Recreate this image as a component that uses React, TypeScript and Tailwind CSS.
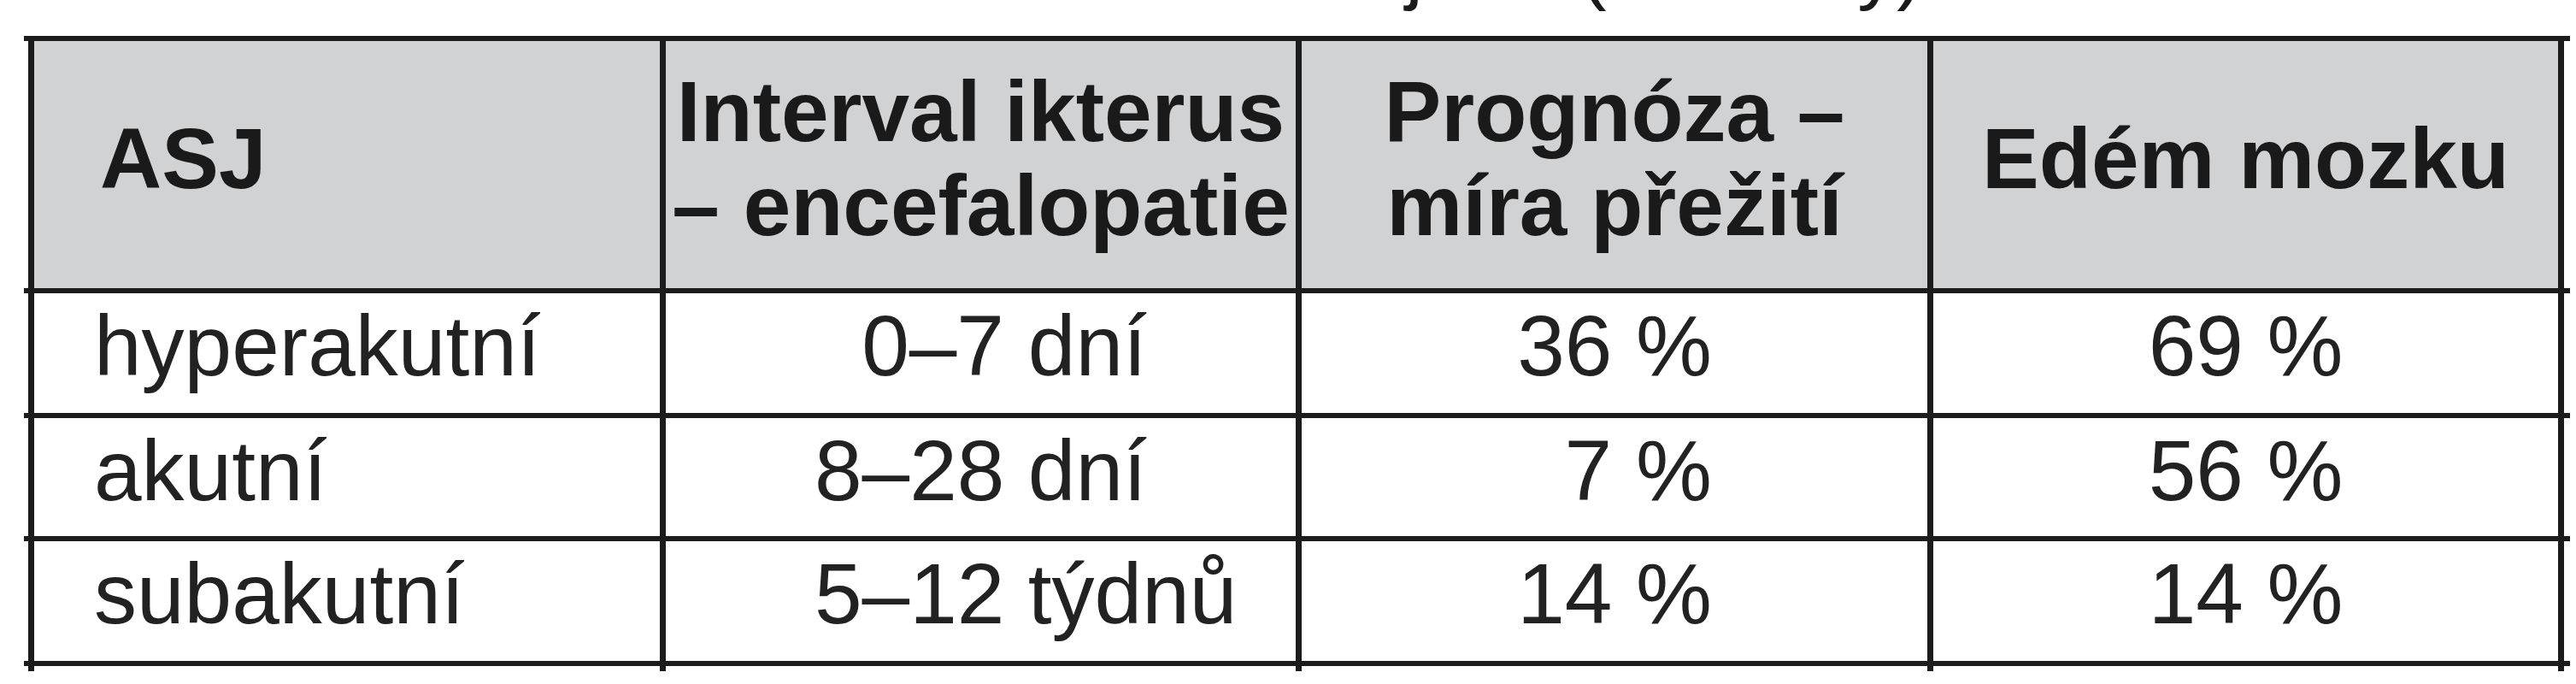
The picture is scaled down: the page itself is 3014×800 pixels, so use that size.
const rows = [
  { name: 'hyperakutní', range: '0–7', unit: 'dní', survival: '36', edema: '69', h: 'h-[146px]' },
  { name: 'akutní', range: '8–28', unit: 'dní', survival: '7', edema: '56', h: 'h-[144px]' },
  { name: 'subakutní', range: '5–12', unit: 'týdnů', survival: '14', edema: '14', h: 'h-[146px]' },
]

function Percent({ value }: { value: string }) {
  return (
    <div className="w-full text-center">
      <span className="inline-block w-[111px] text-right">{value}</span> %
    </div>
  )
}

export default function App() {
  return (
    <div className="w-[3014px] h-[800px] bg-white overflow-hidden text-[#1a1a1a] font-['Liberation_Sans',Arial,sans-serif]">
      {/* caption line, cut off by the top edge */}
      <div className="h-[42px] overflow-hidden">
        <p className="-mt-[84px] pr-[764px] text-right text-[92px] leading-none">
          Tab. 1. Klasifikace akutního selhání jater (O'Grady)
        </p>
      </div>

      <div className="ml-[28px] w-[2979px]">
        {/* header */}
        <div className="h-[295px] flex pl-[5px] pr-[7px] border-t-[6px] border-[#1c1c1c] text-[100px] leading-[110px] font-bold">
          <div className="w-[739px] border-l-[7px] border-[#1c1c1c] bg-[#d1d2d4] flex items-center pb-[15px] pl-[77px]">
            ASJ
          </div>
          <div className="w-[744px] border-l-[7px] border-[#1c1c1c] bg-[#d1d2d4] flex items-center justify-center pb-[15px] text-center">
            <span>
              Interval ikterus
              <br />– encefalopatie
            </span>
          </div>
          <div className="w-[739px] border-l-[7px] border-[#1c1c1c] bg-[#d1d2d4] flex items-center justify-center pb-[15px] text-center">
            <span>
              Prognóza –
              <br />
              míra přežití
            </span>
          </div>
          <div className="w-[745px] border-x-[7px] border-[#1c1c1c] bg-[#d1d2d4] flex items-center justify-center pb-[15px] text-center">
            Edém mozku
          </div>
        </div>

        {rows.map((row) => (
          <div
            key={row.name}
            className={`${row.h} flex pl-[5px] pr-[7px] border-t-[6px] border-[#1c1c1c] text-[100px] leading-[100px] text-[#222]`}
          >
            <div className="w-[739px] border-l-[7px] border-[#1c1c1c] pt-[11px] pl-[70px]">{row.name}</div>
            <div className="w-[744px] border-l-[7px] border-[#1c1c1c] pt-[11px] pl-[174px] whitespace-nowrap">
              <span className="inline-block w-[222px] text-right">{row.range}</span> {row.unit}
            </div>
            <div className="w-[739px] border-l-[7px] border-[#1c1c1c] pt-[11px]">
              <Percent value={row.survival} />
            </div>
            <div className="w-[745px] border-x-[7px] border-[#1c1c1c] pt-[11px]">
              <Percent value={row.edema} />
            </div>
          </div>
        ))}

        {/* bottom rule with the column lines running a little past it */}
        <div className="h-[12px] flex pl-[5px] pr-[7px] border-t-[6px] border-[#1c1c1c]">
          <div className="w-[739px] border-l-[7px] border-[#1c1c1c]" />
          <div className="w-[744px] border-l-[7px] border-[#1c1c1c]" />
          <div className="w-[739px] border-l-[7px] border-[#1c1c1c]" />
          <div className="w-[745px] border-x-[7px] border-[#1c1c1c]" />
        </div>
      </div>
    </div>
  )
}
